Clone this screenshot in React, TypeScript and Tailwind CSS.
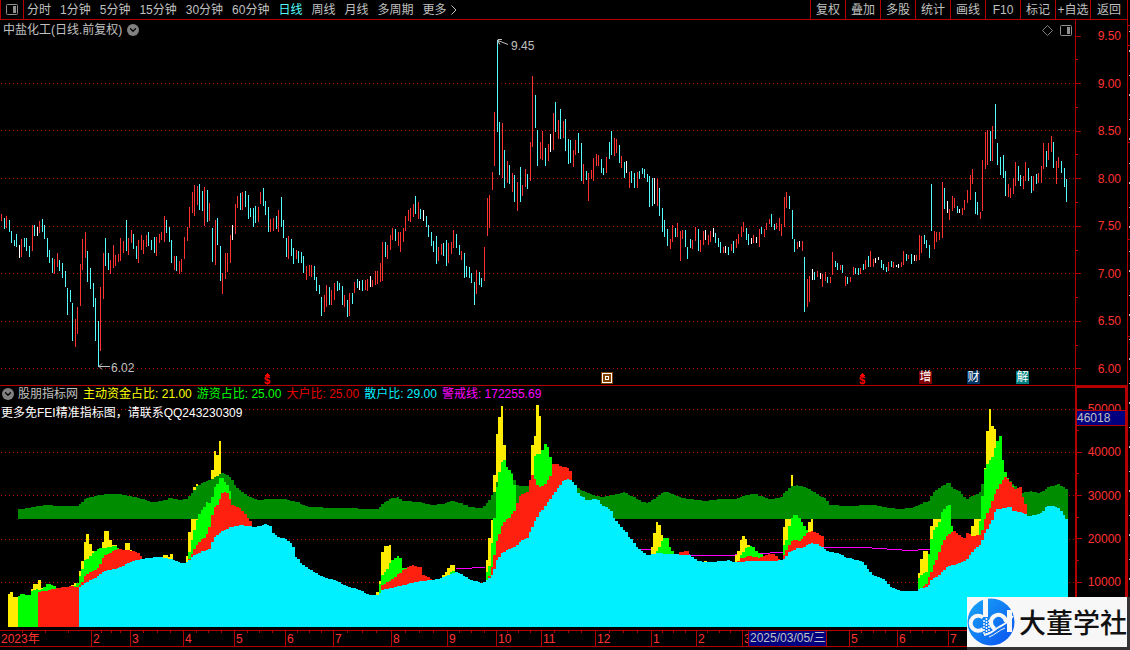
import { ChevronDown } from "lucide-react";
import clsx from "clsx";

const WIDTH = 1075;
const BAR_STEP = 2.542;
const BAR_COUNT = 420;
const BASELINE = 627;

const PERIODS = [
  "分时",
  "1分钟",
  "5分钟",
  "15分钟",
  "30分钟",
  "60分钟",
  "日线",
  "周线",
  "月线",
  "多周期",
];

const TOOLS = ["复权", "叠加", "多股", "统计", "画线", "F10", "标记", "+自选", "返回"];

// One entry per day: colour (r = up, c = down, w = flat), high and low
const CANDLES = `
r214-221 c218-229 r216-228 c220-232 c231-243 c240-246 c234-247 w245-258 r239-257 c238-247
c238-251 c246-257 r225-251 c225-236 w227-236 r221-233 c219-232 c225-239 c238-257 c250-263
c258-273 r259-274 r253-267 c260-271 c263-278 c271-287 c288-315 c290-302 c303-341 r319-347
r307-334 r264-306 r239-270 r232-258 c251-282 c268-289 c283-307 c298-341 c321-367 r287-351
r253-299 c238-266 c253-270 r260-274 r245-268 r255-266 r254-262 r238-261 r241-253 c220-251
r238-255 r230-243 c234-249 c246-259 r240-263 r235-250 r240-254 r235-247 c232-246 c240-250
c237-253 r237-256 r234-243 r232-240 r216-242 c220-233 c227-242 c240-263 r256-270 c256-271
r261-274 r259-272 r237-259 r227-241 r207-228 r192-213 r185-216 r186-205 c184-210 c191-211
r187-226 c190-222 r203-221 c228-262 r220-265 c218-245 c246-281 r273-294 r253-279 r253-272
r235-263 w225-240 r204-234 r196-208 c193-210 r192-210 c191-207 c195-219 c208-217 c208-227
c206-223 r207-222 r192-204 c188-206 c201-215 c207-232 r219-232 r218-231 c216-229 r210-232
c197-227 c220-238 c238-257 r236-259 c239-256 c248-264 r250-259 c251-263 c252-263 c256-273
r266-280 r265-276 r265-277 c266-280 c277-291 c285-294 c297-316 r295-312 r285-307 c287-305
r290-305 r283-300 c281-291 c283-290 c286-305 r295-307 c300-317 r293-316 c293-304 r282-293
c279-288 w281-290 c280-291 r280-290 r279-291 w276-287 r280-287 r271-285 r271-284 r263-282
r242-281 c242-257 r245-259 r235-250 r228-240 c229-241 r232-246 r232-252 r228-242 r216-231
r210-221 r208-222 r204-217 c196-214 r202-219 c209-219 w210-221 c216-227 c225-237 c232-246
c241-252 c236-264 r247-261 r244-255 c243-256 c240-266 r243-263 r242-254 r230-248 c234-248
c245-255 r251-260 c253-278 c266-277 c267-278 c273-283 c282-305 r270-294 c272-285 c278-287
r247-281 r198-236 r195-228 r172-190 r112-166 c40-132 c122-175 r123-178 c150-188 r161-183
c165-184 r173-192 c175-202 r182-211 c167-202 r185-196 r169-187 c174-189 r142-181 r76-147
c95-128 c130-166 r142-159 r131-160 c148-166 r144-161 w134-152 r113-150 c102-132 r120-139
c109-139 r121-138 c119-151 c139-164 c140-163 r150-167 r140-155 c133-153 c143-181 r164-184
c171-180 r173-201 r170-179 r158-181 r154-166 r155-166 c159-173 c168-175 r157-173 c142-159
c131-155 r138-156 r139-153 c145-163 r156-168 c162-178 w161-173 r172-188 c171-183 c173-188
r172-188 c171-179 c168-174 c169-178 c174-182 c176-207 c178-206 w178-204 r179-206 c188-216
c208-232 c220-237 c229-246 r239-249 r225-242 c228-237 r223-237 r231-261 r230-239 c230-247
c247-259 c239-248 r240-249 r227-241 c229-251 r240-252 r231-245 w230-240 r235-245 r231-242
w228-237 c233-243 c238-247 c242-253 r247-253 w246-253 c247-255 r244-251 c241-253 r239-248
r234-244 r227-237 r222-232 c228-240 c234-245 w238-244 r235-243 w237-243 r229-247 c227-234
r229-237 r223-230 r219-224 c214-227 c224-230 r223-229 r218-231 r224-236 r197-227 r192-208
c196-209 c210-239 c239-252 r242-249 w241-247 r241-251 c257-312 r279-307 r276-302 w269-280
c272-280 r271-277 w273-279 r274-287 r272-281 c277-283 r277-283 r252-275 c261-267 c263-270
r265-270 c265-273 r276-286 c277-284 r277-282 r267-275 c268-274 c268-275 r268-274 c264-270
r260-269 c256-267 r251-267 r259-267 w258-263 w257-260 c260-268 c264-270 c267-272 r262-271
c261-267 r262-268 w265-267 w264-268 r262-267 r251-265 c254-261 r255-259 c254-264 w255-261
r255-261 r235-260 r236-253 c235-244 c240-248 c245-258 c184-231 r231-249 r232-242 r232-240
r182-238 c188-209 w201-213 r209-220 r196-211 r198-208 c206-213 w209-213 r208-215 r200-210
r190-203 r175-200 r169-184 c192-214 c202-215 r212-219 r160-211 r132-169 r130-165 c131-161
r126-161 c104-139 c143-165 c157-175 c155-178 c171-196 r184-197 r188-198 r178-194 r162-186
c166-181 c175-186 r176-189 r162-181 c168-181 c176-193 r176-191 c174-184 r173-183 r166-183
r143-169 c151-167 r143-160 r136-152 c142-168 r161-184 r157-168 c161-173 c168-187 c179-202`
  .trim()
  .split(/\s+/);

// Layers of the fund indicator, runs are separated by "|"
const MAIN_FUNDS =
  "8,594 10,592 13,597 18,598|24,595 30,589 33,584 38,580 41,588 46,627|51,585 54,587 57,627|71,585 73,583 77,588 79,571 81,561 84,542 86,534 89,544 92,551 96,627|101,548 102,542 104,531 110,540 112,545 116,627|125,543 130,550 133,627|163,555 169,557 170,554 173,627|186,556 188,532 191,519 193,487 196,484 198,519 211,470 213,451 216,455 219,441 222,627|376,592 379,581 381,552 384,546 389,545 392,627|404,568 409,627|442,575 444,572 447,568 450,565 455,627|485,560 488,538 490,520 493,475 496,434 498,417 501,406 504,445 506,627|531,445 534,436 536,405 539,416 542,627|651,547 653,533 656,522 659,525 661,535 664,627|704,561 707,627|734,555 737,551 740,540 742,536 745,539 748,545 751,627|783,527 785,519 790,475 793,519 798,627|808,522 811,519 814,627|917,573 920,559 923,551 928,566 930,526 933,519 943,627|971,526 973,519 984,468 986,431 989,409 992,426 994,429 997,627";
const BAND =
  "18,509 30,508 37,506 48,505 60,506 78,506 85,499 98,495 108,494 120,494 130,496 143,499 150,502 162,501 170,498 180,500 187,499 190,495 198,485 205,482 212,479 218,475 223,473 230,477 237,488 245,494 257,500 272,499 285,499 297,502 308,507 340,508 378,509 384,502 392,498 398,497 403,501 420,502 432,505 443,504 452,501 460,503 470,507 482,508 488,502 494,492 498,478 505,470 512,473 515,484 518,486 527,486 530,481 534,472 560,480 577,488 582,490 590,494 600,497 608,496 618,494 624,492 632,496 640,501 647,503 655,498 663,492 669,492 678,497 690,499 705,501 720,499 735,499 745,495 755,494 768,499 780,498 784,493 790,487 796,485 805,487 815,493 825,498 830,505 845,506 872,505 897,509 913,508 922,503 929,501 932,493 940,487 948,482 953,488 960,492 966,499 975,495 980,492 984,475 990,470 1010,481 1023,493 1030,491 1040,493 1048,487 1058,484 1064,487 1069,491";
const HOT_MONEY =
  "18,597 20,594 29,595 31,592 35,589 41,590 45,586 48,583 52,585 57,588 59,588|74,588 79,579 81,573 84,561 90,556 95,551 98,549 101,548 111,547 114,545 117,548 122,549|188,555 191,545 194,530 198,516 203,508 207,502 211,504 212,497 215,487 218,482 221,476 225,482 229,488 232,496|379,591 381,576 384,573 388,568 391,560 395,558 398,556 401,559 402,568 407,568 409,570|449,573 452,571 455,571|485,577 488,570 491,557 493,529 496,497 498,477 501,463 504,460 506,466 509,470 512,474 514,485 516,490|533,462 536,453 539,456 542,450 546,442 549,449 551,464 554,466|657,551 659,547 662,541 664,538 668,538 670,547 672,551 674,554|740,556 743,552 747,547 750,546 753,547 755,551 760,553 762,555|783,548 786,540 790,521 795,514 798,516 800,519 803,524 806,529 809,532|917,582 920,576 923,574 927,571 930,546 932,532 936,527 940,520 942,512 945,507 950,505 951,520 953,531 956,534|979,533 981,508 984,473 986,465 989,462 992,457 995,448 997,441 1000,436 1002,450 1004,470 1007,476 1009,480 1012,485 1014,487";
const LARGE_HOLDERS =
  "38,592 50,590 57,588 65,587 70,586 79,587 84,578 86,574 95,570 99,567 102,559 105,555 112,552 117,549 125,550 135,551 140,554 143,560|188,560 191,556 195,547 200,541 206,536 208,531 211,519 214,508 218,504 222,493 226,492 229,496 232,505 240,508 244,513 249,519 252,526|381,586 391,580 398,574 405,569 412,565 420,567 422,574 430,578 432,580|488,577 491,574 493,560 496,545 500,530 505,520 510,517 516,508 518,498 522,494 528,491 531,474 534,476 537,485 541,487 546,483 550,476 553,464 558,464 562,467 569,468 571,474 572,478|679,552 686,551 689,552|737,562 741,558 750,556 760,558 767,554 774,554 778,558 781,560|784,555 787,548 792,541 796,539 800,542 803,537 806,533 813,531 818,534 822,536 824,547|920,588 925,586 930,575 935,562 940,550 944,540 948,534 955,531 960,536 965,539 968,530 971,536 980,535 983,528 986,515 990,508 993,498 998,487 1003,480 1006,476 1010,482 1014,489 1020,487 1023,497 1026,508 1028,516";
const RETAIL =
  "79,588 86,582 95,578 104,571 118,568 130,562 145,558 158,557 172,559 182,563 187,562 193,556 200,552 209,549 214,538 222,531 230,527 240,525 255,527 265,524 270,526 273,533 280,538 285,538 292,544 296,557 302,564 312,571 325,578 338,581 345,586 358,589 370,595 378,595 382,590 400,586 415,582 430,580 437,579 446,576 455,572 462,574 468,579 475,581 483,583 488,579 492,575 496,562 500,555 505,551 515,547 522,540 528,537 533,524 540,512 548,502 556,491 562,482 567,479 574,482 578,493 586,500 597,499 603,506 610,509 615,520 625,531 633,542 640,550 647,555 657,553 668,554 690,555 698,561 705,562 725,561 728,560 733,562 755,561 770,561 783,560 788,553 797,548 802,548 810,543 818,544 827,551 840,554 848,558 862,561 866,566 872,575 885,580 890,587 900,591 917,591 920,588 928,587 931,580 940,574 947,567 960,563 967,559 973,550 980,545 985,533 992,520 996,509 1004,508 1010,507 1013,511 1022,512 1028,516 1040,514 1047,506 1053,506 1060,509 1064,515 1065,519 1069,519";

const WARNING_LINES = [
  "456,568 472,568 477,567 485,568",
  "641,549 651,550 674,554 690,555 735,555 760,554 770,553 783,552",
  "824,547 840,547 872,548 902,550 918,550 921,549 930,549",
];

const INDICATORS = [
  { name: "主动资金占比", value: "21.00", color: "text-[#ffff00]" },
  { name: "游资占比", value: "25.00", color: "text-[#00ff00]" },
  { name: "大户比", value: "25.00", color: "text-[#e60000]" },
  { name: "散户比", value: "29.00", color: "text-[#00f0ff]" },
  { name: "警戒线", value: "172255.69", color: "text-[#ff00ff]" },
];

const PRICES = ["9.50", "9.00", "8.50", "8.00", "7.50", "7.00", "6.50", "6.00"];
const PRICE_LINES = [83, 130, 178, 226, 273, 321, 368];
const VOLUMES = ["50000", "40000", "30000", "20000", "10000"];
const VOLUME_LINES = [409, 452, 495, 539, 582];

const MONTHS = [
  { label: "2023年", start: 0 },
  { label: "2", start: 91 },
  { label: "3", start: 130 },
  { label: "4", start: 183 },
  { label: "5", start: 234 },
  { label: "6", start: 285 },
  { label: "7", start: 333 },
  { label: "8", start: 391 },
  { label: "9", start: 447 },
  { label: "10", start: 496 },
  { label: "11", start: 541 },
  { label: "12", start: 595 },
  { label: "1", start: 651 },
  { label: "2", start: 696 },
  { label: "3", start: 742 },
  { label: "5", start: 849 },
  { label: "6", start: 897 },
  { label: "7", start: 948 },
];
const AXIS_END = 1127;

const EVENTS = [
  { label: "增", x: 919, className: "bg-[#800000] text-white" },
  { label: "财", x: 967, className: "bg-[#003366] text-white" },
  { label: "解", x: 1016, className: "bg-[#008080] text-white" },
];

const barX = (i: number) => Math.round(1 + i * BAR_STEP);

function candlePath(kind: string) {
  return CANDLES.map((candle, i) => {
    if (candle[0] !== kind) return "";
    const [high, low] = candle.slice(1).split("-");
    return `M${barX(i) + 0.5} ${high}V${low}`;
  }).join("");
}

function areaPath(source: string, base: number, stepped = false) {
  let d = "";
  for (const run of source.split("|")) {
    const points = run.split(" ").map((p) => p.split(",").map(Number));
    const last = points[points.length - 1][0];
    for (let i = 0; i < BAR_COUNT; i++) {
      const left = barX(i) - 1;
      const x = left + 1;
      if (x < points[0][0] || x >= last) continue;
      const next = points.findIndex((p) => p[0] > x);
      const [x0, y0] = points[next - 1];
      const [x1, y1] = points[next];
      const y = stepped ? y0 : Math.round(y0 + ((y1 - y0) * (x - x0)) / (x1 - x0));
      if (y < base) d += `M${left} ${base}V${y}H${barX(i + 1) - 1}V${base}Z`;
    }
  }
  return d;
}

function GridLines({ lines }: { lines: number[] }) {
  return (
    <g stroke="#b40000" strokeDasharray="1 3">
      {lines.map((y) => (
        <line key={y} x1="1" x2={WIDTH} y1={y + 0.5} y2={y + 0.5} />
      ))}
    </g>
  );
}

function PanelIcon() {
  return (
    <svg className="h-[11px] w-3" viewBox="0 0 12 11" fill="none">
      <rect x="0.5" y="0.5" width="11" height="10" rx="1" stroke="#909090" />
      <rect x="7" y="2" width="3" height="7" fill="#909090" />
    </svg>
  );
}

function ToggleButton({ label }: { label: string }) {
  return (
    <button
      type="button"
      aria-label={label}
      className="flex size-3 items-center justify-center rounded-full bg-[#808080] text-black"
    >
      <ChevronDown className="size-[10px]" strokeWidth={3} />
    </button>
  );
}

function Toolbar() {
  return (
    <header className="col-span-2 flex justify-between border-b border-[#b40000] text-[#c0c0c0]">
      <nav className="flex items-center gap-[9px] whitespace-nowrap">
        <button
          type="button"
          aria-label="侧栏"
          className="-mr-[6px] flex h-full w-6 items-center justify-center border-x border-[#b40000]"
        >
          <PanelIcon />
        </button>
        {PERIODS.map((period) => (
          <button
            key={period}
            type="button"
            className={clsx(period === "日线" && "text-[#54fcfc]")}
          >
            {period}
          </button>
        ))}
        <button type="button" className="flex items-center gap-1">
          更多
          <svg className="h-2.5 w-[6px]" viewBox="0 0 6 10" fill="none" stroke="#c0c0c0">
            <path d="M0.5 0.5 5 5 0.5 9.5" />
          </svg>
        </button>
      </nav>
      <div className="flex whitespace-nowrap">
        {TOOLS.map((tool) => (
          <button
            key={tool}
            type="button"
            className="w-[35px] border-l border-[#b40000] text-center last:w-[37px]"
          >
            {tool}
          </button>
        ))}
      </div>
    </header>
  );
}

function DividendMark({ x }: { x: number }) {
  return (
    <span
      className="absolute bottom-0 flex w-2 flex-col items-center text-[#ff0000]"
      style={{ left: `${(x / WIDTH) * 100}%` }}
    >
      <svg className="h-[3px] w-[5px]" viewBox="0 0 5 3" fill="currentColor">
        <path d="M2 0h1v1h1v1h1v1H0V2h1V1h1z" />
      </svg>
      <span className="text-[11px] leading-[9px] font-bold">$</span>
    </span>
  );
}

function PriceChart() {
  return (
    <section className="relative overflow-hidden border-b border-[#b40000]">
      <svg
        className="absolute inset-0 size-full"
        viewBox={`0 20 ${WIDTH} 365`}
        preserveAspectRatio="none"
        shapeRendering="crispEdges"
        fill="none"
      >
        <GridLines lines={PRICE_LINES} />
        <path d={candlePath("r")} stroke="#ff3232" />
        <path d={candlePath("c")} stroke="#54fcfc" />
        <path d={candlePath("w")} stroke="#ffffff" />
        <g stroke="#c0c0c0" shapeRendering="auto">
          <path d="M498 40.5 508 44.5M502 39.5h-4v4M498 41l2 3.5" />
          <path d="M98 366.5h12M102 363.5l-3 3 3 3" />
        </g>
      </svg>
      <div className="relative flex items-center justify-between px-[3px] pt-[2px] text-[#c0c0c0]">
        <h1 className="flex items-center gap-[5px]">
          中盐化工(日线.前复权)
          <ToggleButton label="选择股票" />
        </h1>
        <div className="flex items-center gap-[7px]">
          <svg className="size-[11px]" viewBox="0 0 11 11" fill="none" stroke="#808080">
            <path d="M5.5 0.5l5 5-5 5-5-5z" />
          </svg>
          <PanelIcon />
        </div>
      </div>
      <span
        className="absolute leading-3 text-[#c0c0c0]"
        style={{ left: `${(511 / WIDTH) * 100}%`, top: `${(20 / 365) * 100}%` }}
      >
        9.45
      </span>
      <span
        className="absolute leading-3 text-[#c0c0c0]"
        style={{ left: `${(111 / WIDTH) * 100}%`, top: `${(342 / 365) * 100}%` }}
      >
        6.02
      </span>
      <DividendMark x={263} />
      <DividendMark x={858} />
      <svg
        className="absolute bottom-px size-3"
        viewBox="0 0 12 12"
        style={{ left: `${(601 / WIDTH) * 100}%` }}
        shapeRendering="crispEdges"
      >
        <rect width="12" height="12" fill="#804000" />
        <path d="M1.5 1.5h9v9h-9zM4.5 4.5h3v3h-3z" fill="none" stroke="#fff" />
      </svg>
      {EVENTS.map(({ label, x, className }) => (
        <span
          key={label}
          className={clsx("absolute bottom-px w-[13px] text-center leading-[13px]", className)}
          style={{ left: `${(x / WIDTH) * 100}%` }}
        >
          {label}
        </span>
      ))}
    </section>
  );
}

function AxisLabels({ labels }: { labels: string[] }) {
  return labels.map((label, i) => (
    <div key={label} className="contents">
      {i > 0 && (
        <div className="flex h-3 items-center">
          <i className="h-px w-[2px] bg-[#b40000]" />
        </div>
      )}
      <div className="flex h-3 items-center justify-between">
        <i className="h-px w-[5px] bg-[#b40000]" />
        <span>{label}</span>
      </div>
    </div>
  ));
}

function FundsChart() {
  return (
    <section className="relative overflow-hidden">
      <svg
        className="absolute inset-0 size-full"
        viewBox={`0 386 ${WIDTH} 244`}
        preserveAspectRatio="none"
        shapeRendering="crispEdges"
      >
        <GridLines lines={VOLUME_LINES} />
        {WARNING_LINES.map((points) => (
          <polyline key={points} points={points} fill="none" stroke="#ff00ff" />
        ))}
        <path d={areaPath(MAIN_FUNDS, BASELINE, true)} fill="#ffec00" />
        <path d={areaPath(BAND, 519)} fill="#008c00" />
        <path d={areaPath(HOT_MONEY, BASELINE)} fill="#00ff00" />
        <path d={areaPath(LARGE_HOLDERS, BASELINE)} fill="#ff2010" />
        <path d={areaPath(RETAIL, BASELINE)} fill="#00f0ff" />
      </svg>
      <div className="relative flex items-center gap-[5px] pl-[2px] whitespace-nowrap">
        <h2 className="flex items-center gap-1 text-[#c0c0c0]">
          <ToggleButton label="选择指标" />
          股朋指标网
        </h2>
        {INDICATORS.map(({ name, value, color }) => (
          <span key={name} className={color}>
            {name}: {value}
          </span>
        ))}
      </div>
      <p className="relative pt-[3px] pl-px text-white">
        更多免FEI精准指标图，请联系QQ243230309
      </p>
    </section>
  );
}

function TimeAxis() {
  return (
    <footer className="relative col-span-2">
      <div className="flex h-[17px] border-y border-[#b40000] text-[#ff3232]">
        {MONTHS.map(({ label, start }, i) => {
          const end = MONTHS[i + 1]?.start ?? AXIS_END;
          return (
            <div
              key={start}
              className={clsx("relative pt-px pl-px leading-[15px]", i > 0 && "border-l border-[#b40000]")}
              style={{ width: `${((end - start) / AXIS_END) * 100}%` }}
            >
              <div className="absolute inset-x-0 top-0 flex justify-evenly">
                <i className="h-[2px] w-px bg-[#b40000]" />
                <i className="h-[2px] w-px bg-[#b40000]" />
                <i className="h-[2px] w-px bg-[#b40000]" />
              </div>
              {label}
            </div>
          );
        })}
      </div>
      <time
        dateTime="2025-03-05"
        className="absolute top-0 h-[17px] border border-[#b40000] bg-[#000080] px-px leading-[15px] whitespace-nowrap text-[#c0c0c0]"
        style={{ left: `${(748 / AXIS_END) * 100}%` }}
      >
        2025/03/05/三
      </time>
    </footer>
  );
}

function Watermark() {
  return (
    <div className="absolute right-0 bottom-0 bg-[#333333] pr-[3px] pb-[3px]">
      <div className="flex h-[50px] w-40 items-center gap-1 bg-[#f7f7f7]">
        <svg className="size-12 shrink-0" viewBox="0 0 48 48">
          <defs>
            <linearGradient id="disc" x1="0" y1="0" x2="1" y2="1">
              <stop offset="0" stopColor="#18a8f8" />
              <stop offset="1" stopColor="#0a50f0" />
            </linearGradient>
          </defs>
          <circle cx="24" cy="24" r="23.5" fill="url(#disc)" />
          <g fill="none" stroke="#f7f7f7">
            <path d="M16 19.500A7.500 7.500 0 1 0 16 31" strokeWidth="4" />
            <path d="M18.500 1v18" strokeWidth="5" />
            <path d="M28 31a7.500 7.500 0 1 1 11-7" strokeWidth="4" />
            <path d="M42.500 12v22" strokeWidth="5" />
            <path d="M17 37c7-1 10-5 15-8s9-4 14-11" strokeWidth="2" />
            <path d="M22 39c6-2 10-7 16-9" strokeWidth="1" />
          </g>
          <g stroke="#f7f7f7" strokeWidth="1.500" strokeDasharray="2 1">
            <path d="M17 22v14M19.500 20v17M22 22v13" />
          </g>
        </svg>
        <span className="pt-1 text-[27px] leading-[46px] font-medium whitespace-nowrap text-[#111111]">
          大董学社
        </span>
      </div>
    </div>
  );
}

export default function App() {
  return (
    <div className="relative grid h-screen min-h-[480px] grid-cols-[1fr_52px_3px] grid-rows-[20px_366fr_244fr_20px] overflow-hidden bg-black font-['Liberation_Sans','Noto_Sans_CJK_SC',sans-serif] text-[12px] leading-4">
      <Toolbar />
      <aside className="col-start-3 row-span-4 row-start-1 border-l border-[#b40000]">
        <svg className="size-full" viewBox="0 0 2 650" preserveAspectRatio="none">
          <path d="M0 25.500h2M0 45.500h2M0 142.500h2M0 239.500h2M0 336.500h2" stroke="#b40000" />
          <path d="M1.500 31v600" stroke="#c0c0c0" strokeDasharray="1 18 2 23" />
        </svg>
      </aside>
      <PriceChart />
      <div className="flex flex-col justify-between border-b border-l border-[#b40000] pt-[10px] pr-[6px] pb-[10px] leading-3 text-[#ff3232]">
        <AxisLabels labels={PRICES} />
      </div>
      <FundsChart />
      <div className="relative flex flex-col justify-between border-2 border-b-0 border-[#b40000] pt-[15px] pr-1 pb-[42px] leading-3 text-[#ff3232]">
        <AxisLabels labels={VOLUMES} />
        <span className="absolute inset-x-0 top-[22px] border-y border-[#b40000] bg-[#000080] leading-[14px] text-[#c0c0c0]">
          46018
        </span>
      </div>
      <TimeAxis />
      <Watermark />
    </div>
  );
}
